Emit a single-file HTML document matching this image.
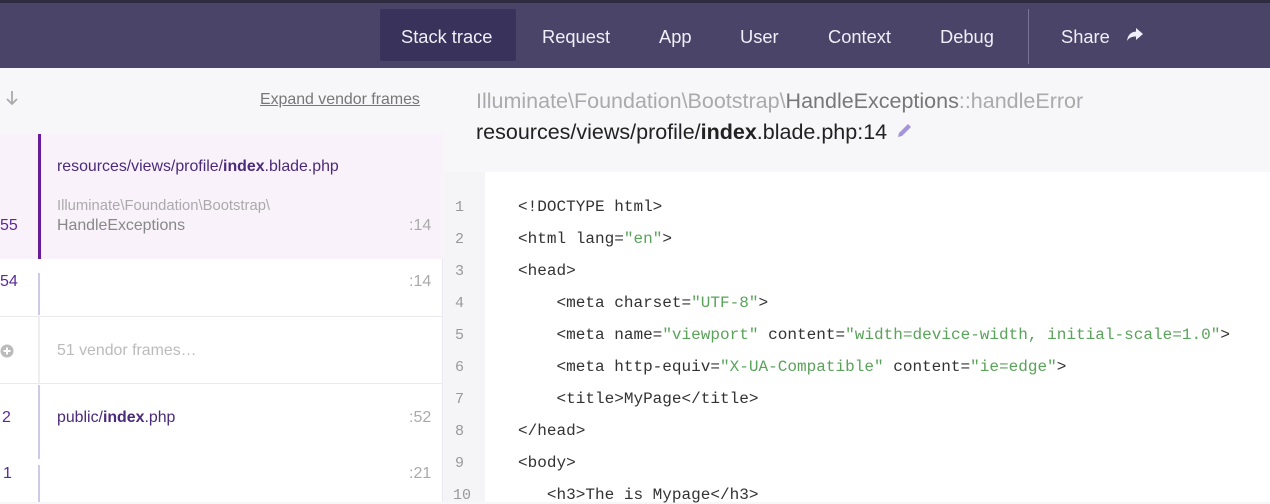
<!DOCTYPE html>
<html><head><style>
*{margin:0;padding:0;box-sizing:border-box}
body{width:1270px;height:502px;overflow:hidden;background:#f7f7fa;font-family:"Liberation Sans",sans-serif;position:relative}
.nav{position:absolute;left:0;top:0;width:1270px;height:68px;background:#4a4468;border-top:3px solid #2f2b40}
.nav span{position:absolute;top:23px;color:#f0eef8;font-size:18.3px}
.act{position:absolute;left:380px;top:6px;width:136px;height:52px;background:#39325a;border-radius:2px}
.sep{position:absolute;left:1028px;top:6px;width:1px;height:55px;background:#7a7496}
.left{position:absolute;left:0;top:68px;width:443px;height:434px;background:#fff;border-right:1px solid #e8e6ee}
.hdr{position:absolute;left:0;top:0;width:443px;height:66px;background:#f7f7fa}
.t{position:absolute;font-size:16px}
.sel{position:absolute;left:0;top:66px;width:443px;height:125px;background:#faf2fb}
.vl{position:absolute;left:38px;width:2px;background:#d0c8e6}
.hl{position:absolute;left:0;width:443px;height:1px;background:#ebe9f0}
.num{color:#5a2a9a}
.grey{color:#aaa}
.right{position:absolute;left:444px;top:68px;width:826px;height:434px}
.gut{position:absolute;left:0;top:104px;width:41px;height:330px;background:#f5f5f8}
.code{position:absolute;left:41px;top:104px;width:785px;height:330px;background:#fff}
.ln{position:absolute;left:11px;font:15px "Liberation Mono",monospace;color:#999}
.cl{position:absolute;left:74px;font:16.05px "Liberation Mono",monospace;color:#333;white-space:pre}
.s{color:#5aa35a}
</style></head><body>
<div class="nav">
<div class="act"></div>
<span style="left:401px">Stack trace</span>
<span style="left:542px">Request</span>
<span style="left:659px">App</span>
<span style="left:740px">User</span>
<span style="left:828px">Context</span>
<span style="left:940px">Debug</span>
<div class="sep"></div>
<span style="left:1061px">Share</span>
<svg style="position:absolute;left:1126px;top:24px" width="18" height="16" viewBox="0 0 18 16"><path d="M10 1 L17 7 L10 13 V9.5 C6 9.5 3 10.5 1 14 C1.5 8.5 4.5 5 10 4.5 Z" fill="#f0eef8"/></svg>
</div>
<div class="left">
<div class="hdr"></div>
<svg style="position:absolute;left:5px;top:22px" width="14" height="16" viewBox="0 0 14 16"><path d="M7 1 V14 M2 9 L7 14 L12 9" stroke="#aaa" stroke-width="1.8" fill="none"/></svg>
<div class="t" style="left:260px;top:23px;color:#777;text-decoration:underline;font-size:15.9px">Expand vendor frames</div>
<div class="sel"></div>
<div style="position:absolute;left:38px;top:66px;width:3px;height:125px;background:#6a1b9a"></div>
<div class="t" style="left:57px;top:90px;color:#4a2a7a;font-size:15.9px">resources/views/profile/<b>index</b>.blade.php</div>
<div class="t grey" style="left:57px;top:130px;font-size:14.8px">Illuminate\Foundation\Bootstrap\</div>
<div class="t" style="left:57px;top:149px;color:#888;font-size:15.9px">HandleExceptions</div>
<div class="t num" style="left:0;top:149px">55</div>
<div class="t grey" style="left:409px;top:149px">:14</div>
<div class="vl" style="top:205px;height:42px"></div>
<div class="t num" style="left:0;top:205px">54</div>
<div class="t grey" style="left:409px;top:205px">:14</div>
<div class="hl" style="top:248px"></div>
<svg style="position:absolute;left:0;top:276px" width="14" height="14" viewBox="0 0 14 14"><circle cx="7" cy="7" r="6.5" fill="#bbb"/><path d="M7 3.5V10.5M3.5 7H10.5" stroke="#fff" stroke-width="2"/></svg>
<div class="vl" style="top:249px;height:66px;background:#eee"></div>
<div class="t" style="left:57px;top:274px;color:#bbb;font-size:15.9px">51 vendor frames…</div>
<div class="hl" style="top:315px"></div>
<div class="vl" style="top:317px;height:74px"></div>
<div class="t num" style="left:2px;top:341px">2</div>
<div class="t" style="left:57px;top:341px;color:#4a2a7a;font-size:15.9px">public/<b>index</b>.php</div>
<div class="t grey" style="left:409px;top:341px">:52</div>
<div class="vl" style="top:397px;height:37px"></div>
<div class="t num" style="left:3px;top:397px">1</div>
<div class="t grey" style="left:409px;top:397px">:21</div>
</div>
<div class="right">
<div class="t" style="left:32px;top:21px;font-size:21.5px;color:#aaa">Illuminate\Foundation\Bootstrap\<span style="color:#777">HandleExceptions</span>::handleError</div>
<div class="t" style="left:32px;top:52px;font-size:21.5px;color:#222">resources/views/profile/<b>index</b>.blade.php:14</div>
<svg style="position:absolute;left:451px;top:54px" width="18" height="18" viewBox="0 0 18 18"><path d="M3 15 L4 11 L13 2 L16 5 L7 14 Z" fill="#a595d8"/></svg>
<div class="gut"></div><div class="code"></div>
<div class="ln" style="top:131px">1</div><div class="cl" style="top:130px">&lt;!DOCTYPE html&gt;</div>
<div class="ln" style="top:163px">2</div><div class="cl" style="top:162px">&lt;html lang=<span class="s">"en"</span>&gt;</div>
<div class="ln" style="top:195px">3</div><div class="cl" style="top:194px">&lt;head&gt;</div>
<div class="ln" style="top:227px">4</div><div class="cl" style="top:226px">    &lt;meta charset=<span class="s">"UTF-8"</span>&gt;</div>
<div class="ln" style="top:259px">5</div><div class="cl" style="top:258px">    &lt;meta name=<span class="s">"viewport"</span> content=<span class="s">"width=device-width, initial-scale=1.0"</span>&gt;</div>
<div class="ln" style="top:291px">6</div><div class="cl" style="top:290px">    &lt;meta http-equiv=<span class="s">"X-UA-Compatible"</span> content=<span class="s">"ie=edge"</span>&gt;</div>
<div class="ln" style="top:323px">7</div><div class="cl" style="top:322px">    &lt;title&gt;MyPage&lt;/title&gt;</div>
<div class="ln" style="top:355px">8</div><div class="cl" style="top:354px">&lt;/head&gt;</div>
<div class="ln" style="top:387px">9</div><div class="cl" style="top:386px">&lt;body&gt;</div>
<div class="ln" style="top:419px;left:9px">10</div><div class="cl" style="top:418px">   &lt;h3&gt;The is Mypage&lt;/h3&gt;</div>
</div>
</body></html>
